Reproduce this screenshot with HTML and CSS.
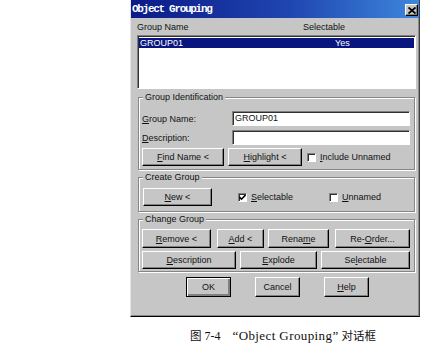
FILE: index.html
```html
<!DOCTYPE html>
<html lang="zh">
<head>
    <meta charset="UTF-8">
    <title>Object Grouping</title>
    <link rel="stylesheet" href="styles.css">
</head>
<body>

    <!-- Ventana del dialogo -->
    <div class="dialog">
        <div class="titlebar">
            <span class="title">Object Grouping</span>
            <span class="close">
                <svg width="8" height="7" viewBox="0 0 8 7"><path d="M0.5 0.5 L7.5 6.5 M7.5 0.5 L0.5 6.5" stroke="#000" stroke-width="1.8"/></svg>
            </span>
        </div>

        <div class="content">
            <div class="list-head">
                <span class="head-name">Group Name</span>
                <span class="head-sel">Selectable</span>
            </div>
            <div class="list">
                <div class="list-row selected">
                    <span class="row-name">GROUP01</span>
                    <span class="row-sel">Yes</span>
                </div>
            </div>

            <fieldset class="group group-ident">
                <legend>Group Identification</legend>
                <div class="field-row first">
                    <label><u>G</u>roup Name:</label>
                    <div class="textbox">GROUP01</div>
                </div>
                <div class="field-row">
                    <label><u>D</u>escription:</label>
                    <div class="textbox"></div>
                </div>
                <div class="btn-row">
                    <button class="btn w-find"><u>F</u>ind Name &lt;</button>
                    <button class="btn w-high"><u>H</u>ighlight &lt;</button>
                    <span class="check"><span class="box"></span><u>I</u>nclude Unnamed</span>
                </div>
            </fieldset>

            <fieldset class="group group-create">
                <legend>Create Group</legend>
                <div class="btn-row">
                    <button class="btn w-new"><u>N</u>ew &lt;</button>
                    <span class="check check-sel">
                        <span class="box">
                            <svg width="7" height="7" viewBox="0 0 7 7"><path d="M0.5 3 L2.5 5.2 L6.5 1" stroke="#000" stroke-width="1.6" fill="none"/></svg>
                        </span><u>S</u>electable
                    </span>
                    <span class="check"><span class="box"></span><u>U</u>nnamed</span>
                </div>
            </fieldset>

            <fieldset class="group group-change">
                <legend>Change Group</legend>
                <div class="btn-row">
                    <button class="btn w-remove"><u>R</u>emove &lt;</button>
                    <button class="btn w-add"><u>A</u>dd &lt;</button>
                    <button class="btn w-rename">Rena<u>m</u>e</button>
                    <button class="btn w-order">Re-<u>O</u>rder...</button>
                </div>
                <div class="btn-row second">
                    <button class="btn w-desc"><u>D</u>escription</button>
                    <button class="btn w-explode"><u>E</u>xplode</button>
                    <button class="btn w-sel">Se<u>l</u>ectable</button>
                </div>
            </fieldset>

            <div class="footer">
                <button class="btn btn-default">OK</button>
                <button class="btn">Cancel</button>
                <button class="btn"><u>H</u>elp</button>
            </div>
        </div>
    </div>

    <p class="caption"><span class="cjk">图</span> 7-4&nbsp;&nbsp;&nbsp; <span class="latin">“Object Grouping”</span> <span class="cjk">对话框</span></p>

</body>
</html>
```

FILE: styles.css
```css
body {
    margin: 0;
    padding: 0;
    background: #fff;
    font-family: 'Liberation Sans', Arial, sans-serif;
    font-size: 9px;
    color: #111;
}

.dialog {
    margin-left: 130px;
    width: 290px;
    height: 317px;
    box-sizing: border-box;
    background: #c6c6c6;
    border-left: 1px solid #e4e4e4;
    border-right: 1px solid #404040;
    border-bottom: 1px solid #000;
    box-shadow: inset -1px -1px #8a8a8a;
}

/* Barra de titulo */
.titlebar {
    height: 18px;
    display: flex;
    justify-content: space-between;
    align-items: center;
    background: linear-gradient(90deg, #0b1a86, #1f46b0 55%, #3d86dc);
}

.title {
    padding-left: 1px;
    font-family: 'Liberation Mono', monospace;
    font-weight: bold;
    font-size: 11px;
    letter-spacing: -1.3px;
    color: #fff;
}

.close {
    width: 13px;
    height: 12px;
    margin-right: 1px;
    margin-top: 2px;
    box-sizing: border-box;
    display: flex;
    justify-content: center;
    align-items: center;
    background: #c6c6c6;
    border: 1px solid;
    border-color: #fff #000 #000 #fff;
    box-shadow: inset -1px -1px #808080;
}

.content {
    padding: 0 3px 0 6px;
}

/* Lista de grupos */
.list-head {
    height: 17px;
    display: flex;
    align-items: center;
}

.head-name {
    width: 166px;
}

.list {
    height: 54px;
    box-sizing: border-box;
    background: #fff;
    border: 1px solid;
    border-color: #808080 #fff #fff #808080;
    box-shadow: inset 1px 1px #303030;
    padding: 1px 1px 0 1px;
}

.list-row {
    margin-top: 1px;
    height: 10px;
    display: flex;
    align-items: center;
}

.list-row.selected {
    background: #0a1680;
    color: #fff;
}

.row-name {
    width: 195px;
    padding-left: 1px;
}

/* Marcos de grupo */
.group {
    margin: 3px 1px 0 1px;
    width: 277px;
    box-sizing: border-box;
    padding: 0 4px 0 3px;
    border: 1px solid #868686;
    box-shadow: inset 1px 1px #fff, 1px 1px #fff;
}

.group legend {
    padding: 0 2px;
    margin-left: 1px;
    line-height: 11px;
    background: #c6c6c6;
}

.group-ident {
    padding-bottom: 3px;
}

.group-create {
    margin-top: 2px;
    padding-bottom: 5px;
}

.group-change {
    margin-top: 2px;
    padding-bottom: 2px;
}

.field-row {
    display: flex;
    align-items: center;
    margin-top: 4px;
}

.field-row.first {
    margin-top: 8px;
}

.field-row label {
    width: 90px;
}

.textbox {
    width: 178px;
    height: 15px;
    box-sizing: border-box;
    padding-left: 2px;
    line-height: 12px;
    background: #fff;
    border: 1px solid;
    border-color: #808080 #fff #fff #808080;
    box-shadow: inset 1px 1px #303030;
}

.btn-row {
    display: flex;
    align-items: center;
    margin-top: 3px;
}

.group-create .btn-row {
    margin-top: 5px;
}

.group-change .btn-row {
    margin-top: 4px;
}

.group-change .btn-row.second {
    margin-top: 3px;
}

/* Botones */
.btn {
    height: 18px;
    padding: 0;
    box-sizing: border-box;
    font-family: 'Liberation Sans', Arial, sans-serif;
    font-size: 9px;
    color: #111;
    background: #c6c6c6;
    border: 1px solid;
    border-color: #fff #000 #000 #fff;
    box-shadow: inset -1px -1px #808080;
}

.w-find { width: 82px; margin-right: 4px; }
.w-high { width: 74px; margin-right: 5px; }
.w-new { width: 69px; margin-left: 1px; margin-right: 26px; }
.w-remove { width: 69px; height: 19px; margin-right: 6px; }
.w-add { width: 47px; height: 19px; margin-right: 4px; }
.w-rename { width: 61px; height: 19px; margin-right: 6px; }
.w-order { width: 75px; height: 19px; }
.w-desc { width: 94px; margin-right: 4px; }
.w-explode { width: 77px; margin-right: 4px; }
.w-sel { width: 89px; }

.check {
    display: flex;
    align-items: center;
}

.check-sel {
    width: 91px;
}

.box {
    width: 9px;
    height: 9px;
    margin-right: 4px;
    box-sizing: border-box;
    display: flex;
    justify-content: center;
    align-items: center;
    background: #fff;
    border: 1px solid;
    border-color: #808080 #fff #fff #808080;
    box-shadow: inset 1px 1px #303030;
}

.footer {
    display: flex;
    margin-top: 5px;
    padding-left: 49px;
    gap: 24px;
}

.footer .btn {
    width: 45px;
    height: 20px;
}

.btn-default {
    border-color: #000;
    box-shadow: inset 1px 1px #fff, inset -2px -2px #808080;
}

/* Pie de figura */
.caption {
    margin: 10px 0 0 190px;
    font-family: 'Liberation Serif', 'Noto Sans CJK SC', serif;
    font-size: 12px;
    color: #111;
}

.latin {
    font-size: 13px;
    letter-spacing: 0.4px;
}

.cjk {
    font-family: 'Noto Sans CJK SC', sans-serif;
    font-size: 11.5px;
}
```
